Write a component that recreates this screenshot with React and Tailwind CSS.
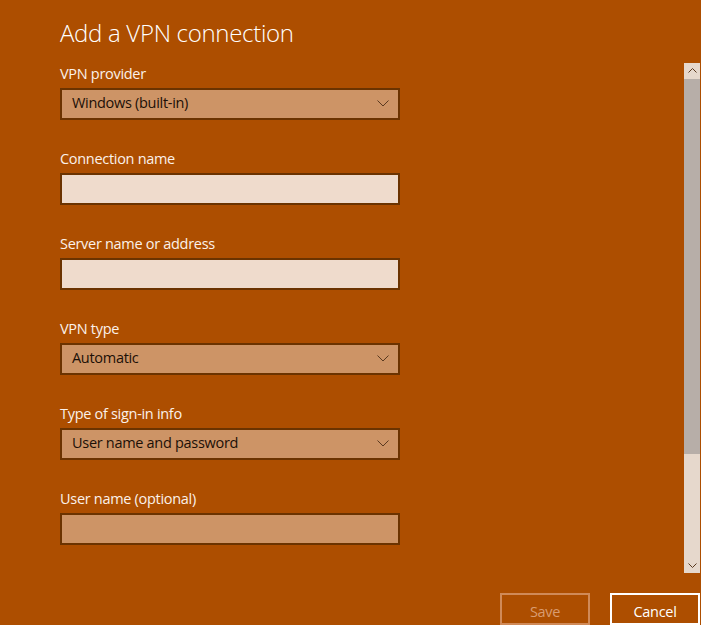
import React from "react";

const Chevron = () => (
  <svg width="12" height="7" viewBox="0 0 12 7" className="shrink-0">
    <path d="M0.5 0.5 L6 6 L11.5 0.5" fill="none" stroke="#5a3a20" strokeWidth="1" />
  </svg>
);

const Select = ({ value }) => (
  <div className="flex h-8 w-[340px] items-center justify-between border-2 border-[#6b3300] bg-[#cd9466] pb-[2px] pl-[10px] pr-[9px] text-[14.5px] leading-5 tracking-[-0.3px] text-[#1c1007]">
    <span>{value}</span>
    <span className="pt-[2px]">
      <Chevron />
    </span>
  </div>
);

const Input = ({ disabled }) => (
  <div
    className={
      disabled
        ? "h-8 w-[340px] border-2 border-[#6b3300] bg-[#cd9466]"
        : "h-8 w-[340px] border-2 border-[#6b3300] bg-[#efdbcc]"
    }
  />
);

const Field = ({ label, children }) => (
  <div className="flex flex-col">
    <div className="h-[21px] pt-px text-[14.5px] leading-5 tracking-[-0.3px] text-[#fbf1ea]">{label}</div>
    <div className="mt-[4px]">{children}</div>
  </div>
);

export default function App() {
  return (
    <div
      className="flex h-[625px] w-[701px] flex-col overflow-hidden bg-[#ad4e00]"
      style={{ fontFamily: '"Open Sans", "Noto Sans", sans-serif' }}
    >
      <div className="h-[63px] pl-[60px] pt-[17px]">
        <h1 className="text-[24px] font-light leading-8 tracking-[-0.3px] text-white">Add a VPN connection</h1>
      </div>
      <div className="flex h-[512px]">
        <div className="flex flex-1 flex-col gap-[28px] pl-[60px]">
          <Field label="VPN provider">
            <Select value="Windows (built-in)" />
          </Field>
          <Field label="Connection name">
            <Input />
          </Field>
          <Field label="Server name or address">
            <Input />
          </Field>
          <Field label="VPN type">
            <Select value="Automatic" />
          </Field>
          <Field label="Type of sign-in info">
            <Select value="User name and password" />
          </Field>
          <Field label="User name (optional)">
            <Input disabled />
          </Field>
        </div>
        <div className="mr-px flex w-4 flex-col bg-[#e6d8cc]">
          <div className="flex h-4 items-center justify-center">
            <svg width="9" height="5" viewBox="0 0 9 5">
              <path d="M0.5 4.5 L4.5 0.5 L8.5 4.5" fill="none" stroke="#5a3a20" strokeWidth="1" />
            </svg>
          </div>
          <div className="h-[375px] bg-[#b7aea8]" />
          <div className="flex-1" />
          <div className="flex h-4 items-center justify-center">
            <svg width="9" height="5" viewBox="0 0 9 5">
              <path d="M0.5 0.5 L4.5 4.5 L8.5 0.5" fill="none" stroke="#5a3a20" strokeWidth="1" />
            </svg>
          </div>
        </div>
      </div>
      <div className="flex justify-end gap-[20px] pr-px pt-[20px]">
        <button className="h-8 w-[90px] border-2 border-[#d08a58] pt-[5px] text-[14.5px] leading-5 tracking-[-0.3px] text-[#d99c70]">Save</button>
        <button className="h-8 w-[90px] border-2 border-white pt-[5px] text-[14.5px] leading-5 tracking-[-0.3px] text-white">Cancel</button>
      </div>
    </div>
  );
}
